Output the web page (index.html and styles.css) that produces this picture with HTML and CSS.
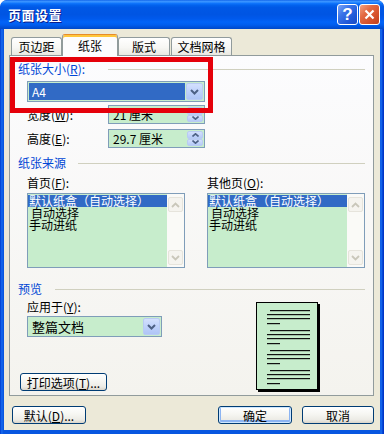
FILE: index.html
```html
<!DOCTYPE html>
<html lang="zh-CN">
<head>
<meta charset="utf-8">
<title>页面设置</title>
<link rel="stylesheet" href="styles.css">
</head>
<body>
<div class="window">
  <div class="titlebar">
    <span class="title">页面设置</span>
    <div class="tb-btns">
      <span class="tb-btn help">?</span>
      <span class="tb-btn close"><svg width="11" height="11" viewBox="0 0 11 11"><path d="M1.5 1.5 L9.5 9.5 M9.5 1.5 L1.5 9.5" stroke="#fff" stroke-width="2.2" fill="none"/></svg></span>
    </div>
  </div>
  <div class="client">
    <div class="tabs">
      <div class="tab t1">页边距</div>
      <div class="tab t2 active">纸张</div>
      <div class="tab t3">版式</div>
      <div class="tab t4">文档网格</div>
    </div>
    <div class="panel">
      <div class="ghdr g1"><span class="glabel">纸张大小(<u>R</u>):</span><i class="rule"></i></div>
      <div class="combo a4">
        <div class="combo-val sel">A4</div>
        <div class="dropbtn"><svg width="9" height="6" viewBox="0 0 9 6"><path d="M1 1 L4.5 4.5 L8 1" stroke="#4D6185" stroke-width="2" fill="none"/></svg></div>
      </div>
      <div class="frow r-w">
        <span class="flabel">宽度(<u>W</u>):</span>
        <div class="spin">
          <div class="spin-val">21 厘米</div>
          <div class="spin-btns">
            <b><svg width="7" height="4" viewBox="0 0 7 4"><path d="M0.5 3.5 L3.5 0.8 L6.5 3.5" stroke="#4D6185" stroke-width="1.6" fill="none"/></svg></b>
            <b><svg width="7" height="4" viewBox="0 0 7 4"><path d="M0.5 0.5 L3.5 3.2 L6.5 0.5" stroke="#4D6185" stroke-width="1.6" fill="none"/></svg></b>
          </div>
        </div>
      </div>
      <div class="frow r-h">
        <span class="flabel">高度(<u>E</u>):</span>
        <div class="spin">
          <div class="spin-val">29.7 厘米</div>
          <div class="spin-btns">
            <b><svg width="7" height="4" viewBox="0 0 7 4"><path d="M0.5 3.5 L3.5 0.8 L6.5 3.5" stroke="#4D6185" stroke-width="1.6" fill="none"/></svg></b>
            <b><svg width="7" height="4" viewBox="0 0 7 4"><path d="M0.5 0.5 L3.5 3.2 L6.5 0.5" stroke="#4D6185" stroke-width="1.6" fill="none"/></svg></b>
          </div>
        </div>
      </div>

      <div class="ghdr g2"><span class="glabel">纸张来源</span><i class="rule"></i></div>
      <div class="sources">
        <div class="src">
          <div class="src-label">首页(<u>F</u>):</div>
          <div class="listbox">
            <div class="lb-items">
              <div class="sel">默认纸盒（自动选择）</div>
              <div class="ind">自动选择</div>
              <div>手动进纸</div>
            </div>
            <div class="vscroll">
              <span class="sb-btn"><svg width="9" height="6" viewBox="0 0 9 6"><path d="M1 5 L4.5 1.5 L8 5" stroke="#C9C7BA" stroke-width="1.8" fill="none"/></svg></span>
              <span class="sb-btn"><svg width="9" height="6" viewBox="0 0 9 6"><path d="M1 1 L4.5 4.5 L8 1" stroke="#C9C7BA" stroke-width="1.8" fill="none"/></svg></span>
            </div>
          </div>
        </div>
        <div class="src">
          <div class="src-label">其他页(<u>O</u>):</div>
          <div class="listbox">
            <div class="lb-items">
              <div class="sel">默认纸盒（自动选择）</div>
              <div class="ind">自动选择</div>
              <div>手动进纸</div>
            </div>
            <div class="vscroll">
              <span class="sb-btn"><svg width="9" height="6" viewBox="0 0 9 6"><path d="M1 5 L4.5 1.5 L8 5" stroke="#C9C7BA" stroke-width="1.8" fill="none"/></svg></span>
              <span class="sb-btn"><svg width="9" height="6" viewBox="0 0 9 6"><path d="M1 1 L4.5 4.5 L8 1" stroke="#C9C7BA" stroke-width="1.8" fill="none"/></svg></span>
            </div>
          </div>
        </div>
      </div>

      <div class="ghdr g3"><span class="glabel">预览</span><i class="rule"></i></div>
      <div class="preview">
        <div class="pv-left">
          <div class="apply-label">应用于(<u>Y</u>):</div>
          <div class="combo apply">
            <div class="combo-val">整篇文档</div>
            <div class="dropbtn"><svg width="9" height="6" viewBox="0 0 9 6"><path d="M1 1 L4.5 4.5 L8 1" stroke="#4D6185" stroke-width="2" fill="none"/></svg></div>
          </div>
          <button class="btn print">打印选项(<u>T</u>)...</button>
        </div>
        <div class="page">
          <svg width="60" height="86" viewBox="0 0 60 86">
            <g fill="#111">
              <rect x="13" y="7" width="40" height="1.2"/><rect x="10" y="11" width="43" height="1.2"/><rect x="10" y="15" width="43" height="1.2"/><rect x="10" y="20" width="13" height="1.2"/>
              <rect x="13" y="27" width="40" height="1.2"/><rect x="10" y="31" width="43" height="1.2"/><rect x="10" y="35" width="43" height="1.2"/><rect x="10" y="40" width="13" height="1.2"/>
              <rect x="13" y="47" width="40" height="1.2"/><rect x="10" y="51" width="43" height="1.2"/><rect x="10" y="55" width="43" height="1.2"/><rect x="10" y="60" width="13" height="1.2"/>
              <rect x="13" y="67" width="40" height="1.2"/><rect x="10" y="71" width="43" height="1.2"/><rect x="10" y="75" width="43" height="1.2"/><rect x="10" y="80" width="13" height="1.2"/>
            </g>
          </svg>
        </div>
      </div>
    </div>
    <div class="footer">
      <button class="btn b-def">默认(<u>D</u>)...</button>
      <div class="spacer"></div>
      <button class="btn b-ok">确定</button>
      <button class="btn b-cancel">取消</button>
    </div>
  </div>
  <div class="red-mark"></div>
</div>
</body>
</html>
```

FILE: styles.css
```css
* { box-sizing: border-box; }
html, body { margin: 0; padding: 0; }
body {
  width: 384px;
  height: 434px;
  overflow: hidden;
  background: #ffffff;
  font-family: "Noto Sans CJK SC", "Noto Sans CJK JP", sans-serif;
  font-size: 12px;
  color: #000;
}
u { text-decoration: underline; text-underline-offset: 1px; }

.window {
  position: relative;
  width: 384px;
  height: 434px;
  display: flex;
  flex-direction: column;
  background: linear-gradient(to right, #0036C8 0, #0A5AE6 1px, #1A6CF0 2px, #0756E0 3px, #0756E0 380px, #1A6CF0 381px, #0A5AE6 382px, #0036C8 383px);
  border-radius: 7px 7px 0 0;
  overflow: hidden;
}

.titlebar {
  height: 29px;
  flex: none;
  display: flex;
  align-items: center;
  padding: 0 4px 0 8px;
  border-radius: 7px 7px 0 0;
  background: linear-gradient(to bottom,
    #0A5EE8 0%, #3E95FF 4%, #2B8AFF 8%, #0E73FB 12%, #0262EE 18%,
    #0058E6 26%, #0055E3 50%, #0059EC 64%, #0264F8 76%, #005DEE 86%,
    #0052DB 93%, #0048C8 100%);
}
.title {
  flex: 1;
  color: #fff;
  font-weight: bold;
  font-size: 13px;
  letter-spacing: 0.5px;
  text-shadow: 1px 1px 0 #0A1C8C;
}
.tb-btns { display: flex; gap: 1px; }
.tb-btn {
  width: 21px;
  height: 21px;
  border: 1px solid #fff;
  border-radius: 3px;
  display: flex;
  align-items: center;
  justify-content: center;
}
.help {
  background: linear-gradient(135deg, #7BA5F8 0%, #3A74E8 35%, #2259D8 70%, #1A4CC4 100%);
  color: #fff;
  font-family: "Liberation Sans", sans-serif;
  font-weight: bold;
  font-size: 17px;
  line-height: 19px;
}
.close {
  background: linear-gradient(135deg, #F3A283 0%, #E36A43 35%, #D5502B 70%, #C0401D 100%);
}

.client {
  flex: 1;
  margin: 0 4px 4px 4px;
  background: #ECE9D8;
  padding: 5px 6px 0 5px;
  display: flex;
  flex-direction: column;
}

.tabs {
  display: flex;
  align-items: flex-end;
  height: 21px;
  margin-left: 2px;
  position: relative;
  z-index: 1;
}
.tab {
  height: 18px;
  border: 1px solid #919B9C;
  border-bottom: none;
  border-radius: 3px 3px 0 0;
  background: linear-gradient(#FFFFFF, #F7F7F4 55%, #E9E8E1);
  display: flex;
  align-items: center;
  justify-content: center;
  line-height: 14px;
}
.t1 { width: 51px; }
.t2 { width: 56px; }
.t3 { width: 52px; }
.t4 { width: 61px; margin-left: 1px; }
.tab.active {
  height: 22px;
  margin-bottom: -1px;
  background: #FCFCFE;
  border-top: 1px solid #E68B2C;
  box-shadow: inset 0 2px 0 #FFC73C;
  padding-top: 1px;
}

.panel {
  height: 341px;
  border: 1px solid #919B9C;
  background: linear-gradient(#FCFCFE, #F4F3EE);
  padding: 0 8px 4px 8px;
}

.ghdr {
  display: flex;
  align-items: center;
  height: 14px;
  line-height: 14px;
  color: #0046D5;
}
.glabel { flex: none; white-space: nowrap; }
.rule { flex: 1; height: 0; border-top: 1px solid #D0D0BF; }
.g1 { margin-top: 6px; }
.g1 .glabel { width: 90px; }
.g2 { margin-top: 8px; }
.g2 .glabel { width: 60px; }
.g3 { margin-top: 14px; }
.g3 .glabel { width: 37px; }

.combo {
  display: flex;
  height: 21px;
  border: 1px solid #7F9DB9;
  background: #C7EDCC;
  padding: 1px;
}
.a4 { margin: 5px 0 0 9px; width: 178px; }
.combo-val {
  flex: 1;
  line-height: 17px;
  padding-left: 3px;
  white-space: nowrap;
}
.combo-val.sel { background: #316AC5; color: #fff; margin-right: 1px; }
.dropbtn {
  width: 17px;
  border: 1px solid #B9CBF3;
  border-radius: 2px;
  background: linear-gradient(#D3E0FD, #BFD2FB 50%, #AFC5F6);
  display: flex;
  align-items: center;
  justify-content: center;
}

.frow {
  display: flex;
  align-items: center;
  height: 19px;
  margin-left: 9px;
}
.r-w { margin-top: 3px; }
.r-h { margin-top: 5px; }
.flabel { width: 81px; white-space: nowrap; }
.spin {
  width: 97px;
  height: 19px;
  display: flex;
  border: 1px solid #7F9DB9;
  background: #C7EDCC;
  padding: 1px;
}
.spin-val { flex: 1; line-height: 15px; padding-left: 3px; white-space: nowrap; }
.spin-btns { width: 16px; display: flex; flex-direction: column; }
.spin-btns b {
  flex: 1;
  border: 1px solid #B9CBF3;
  border-radius: 2px;
  background: linear-gradient(#D3E0FD, #B5CAF7);
  display: flex;
  align-items: center;
  justify-content: center;
}

.sources {
  display: grid;
  grid-template-columns: 158px 158px;
  column-gap: 22px;
  margin: 6px 0 0 9px;
}
.src-label { height: 14px; line-height: 14px; white-space: nowrap; }
.listbox {
  margin-top: 3px;
  height: 75px;
  border: 1px solid #7F9DB9;
  background: #C7EDCC;
  display: flex;
}
.lb-items { flex: 1; padding-top: 1px; }
.lb-items div {
  height: 12px;
  line-height: 12px;
  padding-left: 1px;
  white-space: nowrap;
}
.lb-items .sel { background: #316AC5; color: #fff; }
.lb-items .ind { padding-left: 3px; }
.vscroll {
  width: 17px;
  background: #FAFAF7;
  padding: 3px 1px 2px 1px;
  display: flex;
  flex-direction: column;
  justify-content: space-between;
}
.sb-btn {
  height: 15px;
  border: 1px solid #E6E4DC;
  border-radius: 2px;
  background: #F5F4EF;
  display: flex;
  align-items: center;
  justify-content: center;
}

.preview { display: flex; align-items: flex-start; }
.pv-left { width: 238px; flex: none; }
.apply-label { margin: 4px 0 0 9px; height: 14px; line-height: 14px; }
.apply { margin: 2px 0 0 9px; width: 135px; }
.apply .combo-val { font-size: 13px; }
.page {
  margin-top: 6px;
  width: 62px;
  height: 88px;
  border: 1px solid #000;
  background: #C7EDCC;
  box-shadow: 2px 2px 0 #000;
}
.page svg { display: block; }

.btn {
  display: block;
  height: 18px;
  padding: 0;
  border: 1px solid #003C74;
  border-radius: 3px;
  background: linear-gradient(#FFFFFF 0%, #F6F6F2 45%, #ECEBE5 80%, #D9D4C9 100%);
  font-family: "Noto Sans CJK SC", "Noto Sans CJK JP", sans-serif;
  font-size: 12px;
  line-height: 15px;
  color: #000;
  white-space: nowrap;
}
.print { margin: 36px 0 0 2px; width: 87px; }

.footer {
  display: flex;
  gap: 10px;
  margin-top: 10px;
  padding-left: 3px;
}
.spacer { flex: 1; }
.b-def { width: 74px; }
.b-ok {
  width: 74px;
  box-shadow: inset 0 0 0 1px #CEE7FF, inset 0 -1px 0 2px #8CB4F2;
}
.b-cancel { width: 72px; }

.red-mark {
  position: absolute;
  left: 10px;
  top: 57px;
  width: 203px;
  height: 56px;
  border: 5px solid #E5000A;
}
```
